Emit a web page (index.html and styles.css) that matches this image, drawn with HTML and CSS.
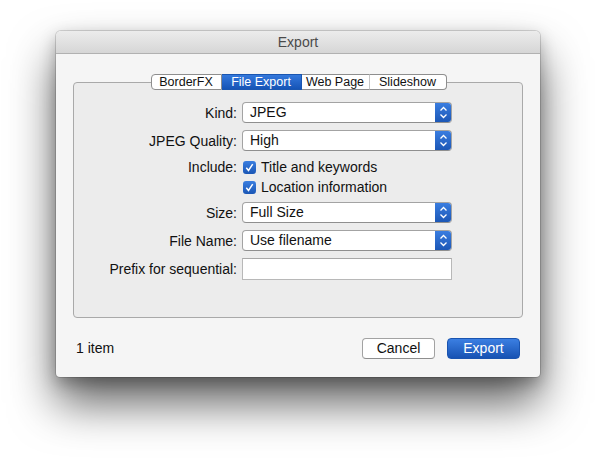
FILE: index.html
```html
<!DOCTYPE html>
<html>
<head>
<meta charset="utf-8">
<link rel="stylesheet" href="styles.css">
</head>
<body>
<div class="window">
  <div class="titlebar">Export</div>
  <div class="content">
    <div class="tabs">
      <div class="tab t1">BorderFX</div>
      <div class="tab t2 active">File Export</div>
      <div class="tab t3">Web Page</div>
      <div class="tab t4">Slideshow</div>
    </div>
    <div class="box">
      <div class="row popup-row">
        <div class="label">Kind:</div>
        <div class="popup"><span class="val">JPEG</span><span class="arrow"><svg width="9" height="13" viewBox="0 0 9 13"><path d="M1.5 4.5 L4.5 1.5 L7.5 4.5 M1.5 8.5 L4.5 11.5 L7.5 8.5" fill="none" stroke="#fff" stroke-width="1.3"/></svg></span></div>
      </div>
      <div class="row popup-row gap7">
        <div class="label">JPEG Quality:</div>
        <div class="popup"><span class="val">High</span><span class="arrow"><svg width="9" height="13" viewBox="0 0 9 13"><path d="M1.5 4.5 L4.5 1.5 L7.5 4.5 M1.5 8.5 L4.5 11.5 L7.5 8.5" fill="none" stroke="#fff" stroke-width="1.3"/></svg></span></div>
      </div>
      <div class="row check-row gap6">
        <div class="label">Include:</div>
        <div class="check"><span class="cb"><svg width="13" height="13" viewBox="0 0 13 13"><path d="M3.3 6.8 L5.5 9.4 L9.7 3.2" fill="none" stroke="#fff" stroke-width="1.5"/></svg></span>Title and keywords</div>
      </div>
      <div class="row check-row">
        <div class="label"></div>
        <div class="check"><span class="cb"><svg width="13" height="13" viewBox="0 0 13 13"><path d="M3.3 6.8 L5.5 9.4 L9.7 3.2" fill="none" stroke="#fff" stroke-width="1.5"/></svg></span>Location information</div>
      </div>
      <div class="row popup-row gap5">
        <div class="label">Size:</div>
        <div class="popup"><span class="val">Full Size</span><span class="arrow"><svg width="9" height="13" viewBox="0 0 9 13"><path d="M1.5 4.5 L4.5 1.5 L7.5 4.5 M1.5 8.5 L4.5 11.5 L7.5 8.5" fill="none" stroke="#fff" stroke-width="1.3"/></svg></span></div>
      </div>
      <div class="row popup-row gap7">
        <div class="label">File Name:</div>
        <div class="popup"><span class="val">Use filename</span><span class="arrow"><svg width="9" height="13" viewBox="0 0 9 13"><path d="M1.5 4.5 L4.5 1.5 L7.5 4.5 M1.5 8.5 L4.5 11.5 L7.5 8.5" fill="none" stroke="#fff" stroke-width="1.3"/></svg></span></div>
      </div>
      <div class="row field-row gap7">
        <div class="label">Prefix for sequential:</div>
        <div class="field"></div>
      </div>
    </div>
    <div class="footer">
      <div class="count">1 item</div>
      <div class="buttons">
        <div class="btn cancel">Cancel</div>
        <div class="btn primary">Export</div>
      </div>
    </div>
  </div>
</div>
</body>
</html>
```

FILE: styles.css
```css
html, body {
  margin: 0;
  padding: 0;
  background: #ffffff;
}
html { height: 100%; }
body {
  font-family: "Liberation Sans", Helvetica, Arial, sans-serif;
  font-size: 14px;
  color: #111;
  padding-top: 31px;
  padding-left: 56px;
  min-height: 458px;
  box-sizing: border-box;
}
.window {
  width: 484px;
  height: 346px;
  box-sizing: border-box;
  background: #f5f5f5;
  border-radius: 5px 5px 4px 4px;
  box-shadow: 0 0 0 1px rgba(0,0,0,0.14), 0 26px 46px rgba(0,0,0,0.62), 0 6px 16px rgba(0,0,0,0.25);
  overflow: hidden;
}
.titlebar {
  height: 22px;
  line-height: 23px;
  text-align: center;
  color: #4a4a4a;
  font-size: 14px;
  background: linear-gradient(#ececec, #d6d6d6);
  border-bottom: 1px solid #b1b1b1;
}
.content {
  padding: 20px 17px 0 17px;
}
.tabs {
  display: flex;
  justify-content: center;
  position: relative;
  z-index: 1;
  margin-bottom: -8px;
  margin-left: 1px;
}
.tab {
  height: 14px;
  line-height: 14px;
  font-size: 12.5px;
  text-align: center;
  background: #ffffff;
  color: #111;
  border: 1px solid #8e8e8e;
  border-left: none;
}
.t1 { width: 69px; border-left: 1px solid #8e8e8e; border-radius: 4px 0 0 4px; }
.t2 { width: 79px; }
.t3 { width: 67px; border-right: 1px solid #c6c6c6; }
.t4 { width: 76px; border-radius: 0 4px 4px 0; }
.tab.active {
  background: linear-gradient(#3478dc, #1654b6);
  color: #ffffff;
  border-color: #1a56b0;
}
.box {
  height: 236px;
  box-sizing: border-box;
  background: #ececec;
  border: 1px solid #a9a9a9;
  border-radius: 4px;
  padding-top: 19px;
}
.row {
  display: grid;
  grid-template-columns: 163px 210px;
  column-gap: 5px;
  align-items: center;
}
.popup-row { height: 21px; }
.check-row { height: 20px; }
.field-row { height: 22px; }
.gap5 { margin-top: 5px; }
.gap6 { margin-top: 6px; }
.gap7 { margin-top: 7px; }
.label {
  text-align: right;
  white-space: nowrap;
}
.popup {
  height: 21px;
  box-sizing: border-box;
  display: flex;
  background: #ffffff;
  border: 1px solid #a3a3a3;
  border-bottom-color: #8f8f8f;
  border-radius: 4px;
  overflow: hidden;
}
.val {
  flex: 1;
  padding-left: 7px;
  line-height: 19px;
}
.arrow {
  width: 17px;
  display: flex;
  align-items: center;
  justify-content: center;
  background: linear-gradient(#3b7fe2, #1a55b4);
  margin: -1px -1px -1px 0;
}
.check {
  display: flex;
  align-items: center;
  gap: 5px;
  white-space: nowrap;
}
.cb {
  width: 13px;
  height: 13px;
  border-radius: 3px;
  background: linear-gradient(#3a7ee0, #1a56b5);
  display: flex;
  margin-left: 1px;
}
.field {
  height: 22px;
  box-sizing: border-box;
  background: #ffffff;
  border: 1px solid #b8b8b8;
  border-top-color: #a8a8a8;
}
.footer {
  display: flex;
  justify-content: space-between;
  align-items: center;
  margin-top: 20px;
  padding-left: 3px;
  padding-right: 3px;
}
.count { line-height: 21px; }
.buttons {
  display: flex;
  gap: 12px;
}
.btn {
  width: 73px;
  height: 21px;
  box-sizing: border-box;
  border-radius: 4px;
  text-align: center;
  line-height: 19px;
}
.cancel {
  background: #ffffff;
  border: 1px solid #a2a2a2;
  border-bottom-color: #8e8e8e;
}
.primary {
  background: linear-gradient(#3b7fe2, #1752b3);
  color: #ffffff;
  border: 1px solid #1a54b0;
}
```
